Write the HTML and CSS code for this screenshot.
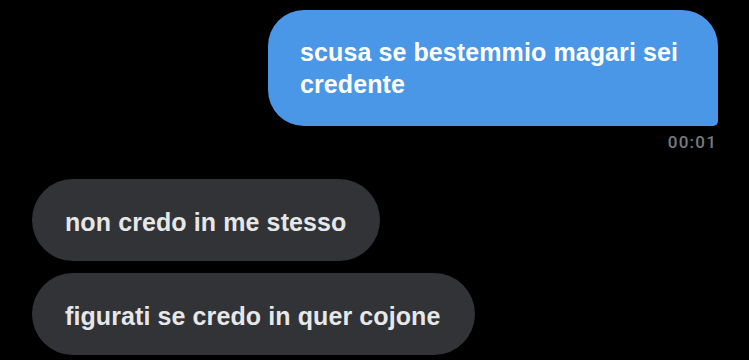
FILE: index.html
```html
<!DOCTYPE html>
<html>
<head>
<meta charset="utf-8">
<link rel="stylesheet" href="styles.css">
</head>
<body>
<div class="chat">
  <div class="bubble out">scusa se bestemmio magari sei credente</div>
  <div class="time">00:01</div>
  <div class="group">
    <div class="bubble in">non credo in me stesso</div>
    <div class="bubble in">figurati se credo in quer cojone</div>
  </div>
</div>
</body>
</html>
```
FILE: styles.css
```css
html, body {
  margin: 0;
  padding: 0;
  background: #000;
  height: 100%;
  overflow: hidden;
}
.chat {
  display: flex;
  flex-direction: column;
  padding: 10px 31px 0 32px;
  font-family: "Liberation Sans", Arial, sans-serif;
}
.bubble {
  font-weight: 700;
  font-size: 25px;
  line-height: 32px;
  letter-spacing: 0.1px;
  box-sizing: border-box;
}
.out {
  align-self: flex-end;
  width: 450px;
  padding: 26px 32px;
  background: #4a97e8;
  color: #fff;
  border-radius: 36px 36px 5px 36px;
}
.time {
  align-self: flex-end;
  margin-top: 6px;
  font-family: Roboto, "Liberation Sans", sans-serif;
  font-weight: 500;
  font-size: 17px;
  line-height: 20px;
  letter-spacing: 1.2px;
  color: #76797e;
  margin-right: 1px;
}
.group {
  display: flex;
  flex-direction: column;
  align-items: flex-start;
  gap: 12px;
  margin-top: 27px;
}
.in {
  background: #323336;
  color: #e6e7e9;
  border-radius: 41px;
  height: 82px;
  padding: 27px 34px 23px 33px;
}
```
